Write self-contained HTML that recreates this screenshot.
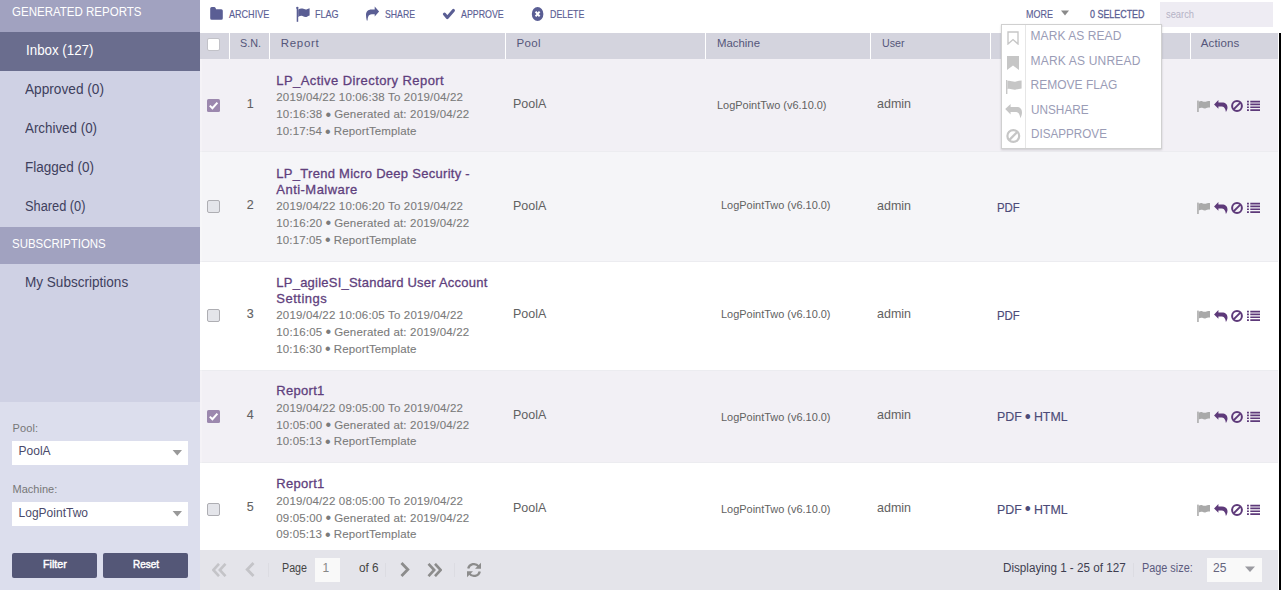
<!DOCTYPE html>
<html><head><meta charset="utf-8"><style>
html,body{margin:0;padding:0;}
body{width:1281px;height:590px;position:relative;overflow:hidden;background:#ffffff;font-family:"Liberation Sans", sans-serif;}
body>div,body>span{position:absolute;}
.t{white-space:nowrap;}
.bu{font-weight:400;font-size:1.4em;line-height:0;vertical-align:-0.1em;margin:0 -0.4px;-webkit-text-stroke:0;}
</style></head><body>
<div style="left:0px;top:0px;width:200px;height:402px;background:#cfd1e4;"></div>
<div style="left:0px;top:402px;width:200px;height:188px;background:#dcdeed;"></div>
<div style="left:0px;top:0px;width:200px;height:32px;background:#a1a2c0;"></div>
<span class="t" style="left:11.5px;top:6.14px;font-size:12px;line-height:12px;color:#ffffff;font-weight:400;transform:scaleX(0.9597);transform-origin:0 0;">GENERATED REPORTS</span>
<div style="left:0px;top:32px;width:200px;height:39px;background:#6a6d8e;"></div>
<span class="t" style="left:25.5px;top:43.15px;font-size:14px;line-height:14px;color:#ffffff;font-weight:400;transform:scaleX(0.9529);transform-origin:0 0;">Inbox (127)</span>
<span class="t" style="left:25px;top:82.15px;font-size:14px;line-height:14px;color:#3e405d;font-weight:400;transform:scaleX(0.9763);transform-origin:0 0;">Approved (0)</span>
<span class="t" style="left:25px;top:121.15px;font-size:14px;line-height:14px;color:#3e405d;font-weight:400;transform:scaleX(0.9541);transform-origin:0 0;">Archived (0)</span>
<span class="t" style="left:25px;top:160.15px;font-size:14px;line-height:14px;color:#3e405d;font-weight:400;transform:scaleX(0.9636);transform-origin:0 0;">Flagged (0)</span>
<span class="t" style="left:25px;top:199.15px;font-size:14px;line-height:14px;color:#3e405d;font-weight:400;transform:scaleX(0.9146);transform-origin:0 0;">Shared (0)</span>
<div style="left:0px;top:227px;width:200px;height:37px;background:#a1a2c0;"></div>
<span class="t" style="left:11.6px;top:238.04px;font-size:12px;line-height:12px;color:#ffffff;font-weight:400;transform:scaleX(0.9568);transform-origin:0 0;">SUBSCRIPTIONS</span>
<span class="t" style="left:25.4px;top:274.95px;font-size:14px;line-height:14px;color:#3e405d;font-weight:400;transform:scaleX(0.968);transform-origin:0 0;">My Subscriptions</span>
<span class="t" style="left:12.6px;top:422.69px;font-size:11px;line-height:11px;color:#777777;font-weight:400;letter-spacing:0.08px;">Pool:</span>
<div style="left:12px;top:441px;width:176px;height:24px;background:#ffffff;"></div>
<span class="t" style="left:18.6px;top:445.34px;font-size:12px;line-height:12px;color:#4a4a6a;font-weight:400;">PoolA</span>
<svg style="position:absolute;left:172px;top:449px" width="11" height="7" viewBox="0 0 11 7"><path d="M0.6 1h9.4l-4.7 5.4z" fill="#999"/></svg>
<span class="t" style="left:12.6px;top:483.99px;font-size:11px;line-height:11px;color:#777777;font-weight:400;">Machine:</span>
<div style="left:12px;top:502px;width:176px;height:24px;background:#ffffff;"></div>
<span class="t" style="left:18.6px;top:506.84px;font-size:12px;line-height:12px;color:#4a4a6a;font-weight:400;">LogPointTwo</span>
<svg style="position:absolute;left:172px;top:510px" width="11" height="7" viewBox="0 0 11 7"><path d="M0.6 1h9.4l-4.7 5.4z" fill="#999"/></svg>
<div style="left:12px;top:553px;width:85px;height:25px;background:#545777;border-radius:2px"></div>
<div style="left:103px;top:553px;width:85px;height:25px;background:#545777;border-radius:2px"></div>
<span class="t" style="left:43px;top:559.49px;font-size:11px;line-height:11px;color:#ffffff;font-weight:400;transform:scaleX(0.9705);transform-origin:0 0;-webkit-text-stroke:0.45px #ffffff;">Filter</span>
<span class="t" style="left:133px;top:559.49px;font-size:11px;line-height:11px;color:#ffffff;font-weight:400;transform:scaleX(0.9056);transform-origin:0 0;-webkit-text-stroke:0.45px #ffffff;">Reset</span>
<svg style="position:absolute;left:210px;top:7px" width="13" height="13" viewBox="0 0 13 13"><path d="M0.2 1.5Q0.2 0 1.7 0H4.2Q5.1 0 5.6 1L6.1 2.3H11.3Q12.8 2.3 12.8 3.8V11.3Q12.8 12.8 11.3 12.8H1.7Q0.2 12.8 0.2 11.3Z" fill="#5a5e94"/></svg>
<span class="t" style="left:228.5px;top:8.79px;font-size:11px;line-height:11px;color:#5a5e94;font-weight:400;transform:scaleX(0.8232);transform-origin:0 0;-webkit-text-stroke:0.15px #5a5e94;">ARCHIVE</span>
<svg style="position:absolute;left:296px;top:6px" width="14" height="16" viewBox="0 0 14 16"><rect x="0.7" y="1" width="1.5" height="14.8" fill="#5a5e94"/><circle cx="1.3" cy="1.9" r="1.1" fill="#5a5e94"/><path d="M2.2 3.6C3.5 2.8 5 2.2 6.5 2.6C8 3 9.5 3.8 11 3.2C11.8 2.9 12.5 2.5 13.6 2.2V9.6C12.5 10 11.8 10.4 11 10.8C9.5 11.4 8 10.7 6.5 10C5 9.5 3.5 10.2 2.2 11Z" fill="#5a5e94"/></svg>
<span class="t" style="left:314.75px;top:8.79px;font-size:11px;line-height:11px;color:#5a5e94;font-weight:400;transform:scaleX(0.822);transform-origin:0 0;-webkit-text-stroke:0.15px #5a5e94;">FLAG</span>
<svg style="position:absolute;left:365px;top:6px" width="15" height="15" viewBox="0 0 15 15"><path d="M14.1 5.5L9.7 0.56V3.6H6.5C3 3.6 1 5.8 1 9C1 11 1.3 12.8 1.75 14.46H2.6C2.7 12 3 8.2 6.8 8.2H9.7V10.56Z" fill="#5a5e94"/></svg>
<span class="t" style="left:384.6px;top:8.79px;font-size:11px;line-height:11px;color:#5a5e94;font-weight:400;transform:scaleX(0.7917);transform-origin:0 0;-webkit-text-stroke:0.15px #5a5e94;">SHARE</span>
<svg style="position:absolute;left:442px;top:8px" width="14" height="13" viewBox="0 0 14 13"><path d="M2.4 6.1L5.3 9.6L11.4 2.4" stroke="#5a5e94" stroke-width="3.1" fill="none" stroke-linecap="round" stroke-linejoin="round"/></svg>
<span class="t" style="left:461px;top:8.79px;font-size:11px;line-height:11px;color:#5a5e94;font-weight:400;transform:scaleX(0.8038);transform-origin:0 0;-webkit-text-stroke:0.15px #5a5e94;">APPROVE</span>
<svg style="position:absolute;left:531px;top:7px" width="14" height="14" viewBox="0 0 14 14"><ellipse cx="6.6" cy="7" rx="5.8" ry="7" fill="#5a5e94"/><path d="M4.6 4.7L8.6 9.3M8.6 4.7L4.6 9.3" stroke="#fff" stroke-width="2"/></svg>
<span class="t" style="left:549.6px;top:8.79px;font-size:11px;line-height:11px;color:#5a5e94;font-weight:400;transform:scaleX(0.8039);transform-origin:0 0;-webkit-text-stroke:0.15px #5a5e94;">DELETE</span>
<span class="t" style="left:1026px;top:8.79px;font-size:11px;line-height:11px;color:#5a5e94;font-weight:400;transform:scaleX(0.8182);transform-origin:0 0;-webkit-text-stroke:0.15px #5a5e94;">MORE</span>
<svg style="position:absolute;left:1061px;top:10px" width="8" height="6" viewBox="0 0 8 6"><path d="M0 0.5h8l-4 5z" fill="#8a8a8a"/></svg>
<span class="t" style="left:1090.3px;top:8.79px;font-size:11px;line-height:11px;color:#5a5e94;font-weight:400;transform:scaleX(0.8102);transform-origin:0 0;-webkit-text-stroke:0.3px #5a5e94;">0 SELECTED</span>
<div style="left:1160px;top:2px;width:113px;height:25px;background:#eeecf3;"></div>
<span class="t" style="left:1165.5px;top:8.59px;font-size:11px;line-height:11px;color:#b5b3c6;font-weight:400;transform:scaleX(0.8485);transform-origin:0 0;">search</span>
<div style="left:200px;top:33px;width:1079px;height:26px;background:#d4d4de;"></div>
<div style="left:229px;top:33px;width:1px;height:26px;background:#ffffff;"></div>
<div style="left:269px;top:33px;width:1px;height:26px;background:#ffffff;"></div>
<div style="left:505px;top:33px;width:1px;height:26px;background:#ffffff;"></div>
<div style="left:705px;top:33px;width:1px;height:26px;background:#ffffff;"></div>
<div style="left:870px;top:33px;width:1px;height:26px;background:#ffffff;"></div>
<div style="left:990px;top:33px;width:1px;height:26px;background:#ffffff;"></div>
<div style="left:1190px;top:33px;width:1px;height:26px;background:#ffffff;"></div>
<div style="left:1278px;top:33px;width:1px;height:26px;background:#ffffff;"></div>
<div style="left:207px;top:38px;width:13px;height:13px;background:#ffffff;box-sizing:border-box;border:1px solid #c2c2c8;border-radius:2px"></div>
<span class="t" style="left:240.4px;top:37.77px;font-size:11.5px;line-height:11.5px;color:#55567a;font-weight:400;transform:scaleX(0.9389);transform-origin:0 0;">S.N.</span>
<span class="t" style="left:280.7px;top:37.77px;font-size:11.5px;line-height:11.5px;color:#55567a;font-weight:400;letter-spacing:0.7px;">Report</span>
<span class="t" style="left:516.5px;top:37.77px;font-size:11.5px;line-height:11.5px;color:#55567a;font-weight:400;letter-spacing:0.333px;">Pool</span>
<span class="t" style="left:716.5px;top:37.77px;font-size:11.5px;line-height:11.5px;color:#55567a;font-weight:400;transform:scaleX(0.9892);transform-origin:0 0;">Machine</span>
<span class="t" style="left:881.5px;top:37.77px;font-size:11.5px;line-height:11.5px;color:#55567a;font-weight:400;transform:scaleX(0.9273);transform-origin:0 0;">User</span>
<span class="t" style="left:1001px;top:37.77px;font-size:11.5px;line-height:11.5px;color:#55567a;font-weight:400;">Format</span>
<span class="t" style="left:1200.8px;top:37.77px;font-size:11.5px;line-height:11.5px;color:#55567a;font-weight:400;letter-spacing:0.113px;">Actions</span>
<div style="left:200px;top:59px;width:1078px;height:93px;background:#f2f0f5;"></div>
<div style="left:200px;top:151px;width:1078px;height:1px;background:#ececf0;"></div>
<svg style="position:absolute;left:207px;top:99px" width="13" height="13" viewBox="0 0 13 13"><rect x="0" y="0" width="13" height="13" rx="1.5" fill="#9c88ae"/><path d="M2.8 6.6L5.4 9.2L10.4 3.6" stroke="#fff" stroke-width="2" fill="none"/></svg>
<span class="t" style="left:246.8px;top:97.92px;font-size:12.5px;line-height:12.5px;color:#616161;font-weight:400;-webkit-text-stroke:0.1px #616161;">1</span>
<span class="t" style="left:276.3px;top:74.00px;font-size:13px;line-height:13px;color:#5f3f7d;font-weight:400;letter-spacing:0.425px;-webkit-text-stroke:0.3px #5f3f7d;">LP_Active Directory Report</span>
<span class="t" style="left:276.3px;top:92.47px;font-size:11.5px;line-height:11.5px;color:#7b7b7b;font-weight:400;letter-spacing:0.162px;-webkit-text-stroke:0.1px #7b7b7b;">2019/04/22 10:06:38 To 2019/04/22</span>
<span class="t" style="left:276.3px;top:109.27px;font-size:11.5px;line-height:11.5px;color:#7b7b7b;font-weight:400;letter-spacing:0.169px;-webkit-text-stroke:0.1px #7b7b7b;">10:16:38 <b class="bu">&#8226;</b> Generated at: 2019/04/22</span>
<span class="t" style="left:276.3px;top:126.07px;font-size:11.5px;line-height:11.5px;color:#7b7b7b;font-weight:400;letter-spacing:0.125px;-webkit-text-stroke:0.1px #7b7b7b;">10:17:54 <b class="bu">&#8226;</b> ReportTemplate</span>
<span class="t" style="left:512.5px;top:97.00px;font-size:13px;line-height:13px;color:#616161;font-weight:400;transform:scaleX(0.9623);transform-origin:0 0;">PoolA</span>
<span class="t" style="left:716.9px;top:99.69px;font-size:11px;line-height:11px;color:#616161;font-weight:400;transform:scaleX(0.995);transform-origin:0 0;">LogPointTwo (v6.10.0)</span>
<span class="t" style="left:876.9px;top:97.00px;font-size:13px;line-height:13px;color:#616161;font-weight:400;transform:scaleX(0.9598);transform-origin:0 0;">admin</span>
<svg style="position:absolute;left:1197px;top:100px" width="14" height="12" viewBox="0 0 14 12"><rect x="0.2" y="0.6" width="1.5" height="11.4" fill="#a9a9a9"/><path d="M1.7 1.8C2.8 1.2 4 0.9 5.2 1.2C6.4 1.5 7.6 2.1 8.8 1.7C9.6 1.4 10.3 1.1 13 1.1V7.6C10.3 7.7 9.6 8 8.8 8.3C7.6 8.8 6.4 8.2 5.2 7.8C4 7.5 2.8 7.9 1.7 8.4Z" fill="#a9a9a9"/></svg>
<svg style="position:absolute;left:1213px;top:99px" width="15" height="14" viewBox="0 0 15 14"><path d="M1.06 5.4L5.4 1V3.5H9C12.5 3.5 14.5 5.5 14.5 8.5C14.5 10 13.8 11.7 12.9 12.9C12.8 10.8 11.5 7.4 9 7.4H5.4V9.75Z" fill="#5e3a7a"/></svg>
<svg style="position:absolute;left:1231px;top:100px" width="13" height="12" viewBox="0 0 13 12"><circle cx="6" cy="6" r="4.9" stroke="#5e3a7a" stroke-width="2" fill="none"/><path d="M2.6 9.4L9.4 2.6" stroke="#5e3a7a" stroke-width="2"/></svg>
<svg style="position:absolute;left:1247px;top:100px" width="13" height="12" viewBox="0 0 13 12"><path d="M0 0.7h1.9v1.7H0zM0 3.6h1.9v1.7H0zM0 6.4h1.9v1.7H0zM0 9.2h1.9v1.7H0zM3.3 0.7h9.7v1.7H3.3zM3.3 3.6h9.7v1.7H3.3zM3.3 6.4h9.7v1.7H3.3zM3.3 9.2h9.7v1.7H3.3z" fill="#5e3a7a"/></svg>
<div style="left:200px;top:152px;width:1078px;height:110px;background:#f5f5f8;"></div>
<div style="left:200px;top:261px;width:1078px;height:1px;background:#ececf0;"></div>
<div style="left:207px;top:200px;width:13px;height:13px;background:#e4e5ea;box-sizing:border-box;border:1px solid #aeaeb3;border-radius:2px"></div>
<span class="t" style="left:246.8px;top:199.42px;font-size:12.5px;line-height:12.5px;color:#616161;font-weight:400;-webkit-text-stroke:0.1px #616161;">2</span>
<span class="t" style="left:276.3px;top:166.60px;font-size:13px;line-height:13px;color:#5f3f7d;font-weight:400;letter-spacing:0.283px;-webkit-text-stroke:0.3px #5f3f7d;">LP_Trend Micro Deep Security -</span>
<span class="t" style="left:276.3px;top:183.00px;font-size:13px;line-height:13px;color:#5f3f7d;font-weight:400;letter-spacing:0.468px;-webkit-text-stroke:0.3px #5f3f7d;">Anti-Malware</span>
<span class="t" style="left:276.3px;top:200.77px;font-size:11.5px;line-height:11.5px;color:#7b7b7b;font-weight:400;letter-spacing:0.162px;-webkit-text-stroke:0.1px #7b7b7b;">2019/04/22 10:06:20 To 2019/04/22</span>
<span class="t" style="left:276.3px;top:217.77px;font-size:11.5px;line-height:11.5px;color:#7b7b7b;font-weight:400;letter-spacing:0.169px;-webkit-text-stroke:0.1px #7b7b7b;">10:16:20 <b class="bu">&#8226;</b> Generated at: 2019/04/22</span>
<span class="t" style="left:276.3px;top:234.67px;font-size:11.5px;line-height:11.5px;color:#7b7b7b;font-weight:400;letter-spacing:0.125px;-webkit-text-stroke:0.1px #7b7b7b;">10:17:05 <b class="bu">&#8226;</b> ReportTemplate</span>
<span class="t" style="left:512.5px;top:198.50px;font-size:13px;line-height:13px;color:#616161;font-weight:400;transform:scaleX(0.9623);transform-origin:0 0;">PoolA</span>
<span class="t" style="left:720.6px;top:199.99px;font-size:11px;line-height:11px;color:#616161;font-weight:400;transform:scaleX(0.995);transform-origin:0 0;">LogPointTwo (v6.10.0)</span>
<span class="t" style="left:876.9px;top:198.50px;font-size:13px;line-height:13px;color:#616161;font-weight:400;transform:scaleX(0.9598);transform-origin:0 0;">admin</span>
<span class="t" style="left:997.4px;top:200.50px;font-size:13px;line-height:13px;color:#4c4b78;font-weight:400;transform:scaleX(0.8769);transform-origin:0 0;-webkit-text-stroke:0.15px #4c4b78;">PDF</span>
<svg style="position:absolute;left:1197px;top:201.5px" width="14" height="12" viewBox="0 0 14 12"><rect x="0.2" y="0.6" width="1.5" height="11.4" fill="#a9a9a9"/><path d="M1.7 1.8C2.8 1.2 4 0.9 5.2 1.2C6.4 1.5 7.6 2.1 8.8 1.7C9.6 1.4 10.3 1.1 13 1.1V7.6C10.3 7.7 9.6 8 8.8 8.3C7.6 8.8 6.4 8.2 5.2 7.8C4 7.5 2.8 7.9 1.7 8.4Z" fill="#a9a9a9"/></svg>
<svg style="position:absolute;left:1213px;top:200.5px" width="15" height="14" viewBox="0 0 15 14"><path d="M1.06 5.4L5.4 1V3.5H9C12.5 3.5 14.5 5.5 14.5 8.5C14.5 10 13.8 11.7 12.9 12.9C12.8 10.8 11.5 7.4 9 7.4H5.4V9.75Z" fill="#5e3a7a"/></svg>
<svg style="position:absolute;left:1231px;top:201.5px" width="13" height="12" viewBox="0 0 13 12"><circle cx="6" cy="6" r="4.9" stroke="#5e3a7a" stroke-width="2" fill="none"/><path d="M2.6 9.4L9.4 2.6" stroke="#5e3a7a" stroke-width="2"/></svg>
<svg style="position:absolute;left:1247px;top:201.5px" width="13" height="12" viewBox="0 0 13 12"><path d="M0 0.7h1.9v1.7H0zM0 3.6h1.9v1.7H0zM0 6.4h1.9v1.7H0zM0 9.2h1.9v1.7H0zM3.3 0.7h9.7v1.7H3.3zM3.3 3.6h9.7v1.7H3.3zM3.3 6.4h9.7v1.7H3.3zM3.3 9.2h9.7v1.7H3.3z" fill="#5e3a7a"/></svg>
<div style="left:200px;top:262px;width:1078px;height:109px;background:#ffffff;"></div>
<div style="left:200px;top:370px;width:1078px;height:1px;background:#ececf0;"></div>
<div style="left:207px;top:309px;width:13px;height:13px;background:#e4e5ea;box-sizing:border-box;border:1px solid #aeaeb3;border-radius:2px"></div>
<span class="t" style="left:246.8px;top:307.92px;font-size:12.5px;line-height:12.5px;color:#616161;font-weight:400;-webkit-text-stroke:0.1px #616161;">3</span>
<span class="t" style="left:276.3px;top:275.90px;font-size:13px;line-height:13px;color:#5f3f7d;font-weight:400;letter-spacing:0.233px;-webkit-text-stroke:0.3px #5f3f7d;">LP_agileSI_Standard User Account</span>
<span class="t" style="left:276.3px;top:292.10px;font-size:13px;line-height:13px;color:#5f3f7d;font-weight:400;letter-spacing:0.501px;-webkit-text-stroke:0.3px #5f3f7d;">Settings</span>
<span class="t" style="left:276.3px;top:310.07px;font-size:11.5px;line-height:11.5px;color:#7b7b7b;font-weight:400;letter-spacing:0.162px;-webkit-text-stroke:0.1px #7b7b7b;">2019/04/22 10:06:05 To 2019/04/22</span>
<span class="t" style="left:276.3px;top:326.77px;font-size:11.5px;line-height:11.5px;color:#7b7b7b;font-weight:400;letter-spacing:0.169px;-webkit-text-stroke:0.1px #7b7b7b;">10:16:05 <b class="bu">&#8226;</b> Generated at: 2019/04/22</span>
<span class="t" style="left:276.3px;top:343.57px;font-size:11.5px;line-height:11.5px;color:#7b7b7b;font-weight:400;letter-spacing:0.125px;-webkit-text-stroke:0.1px #7b7b7b;">10:16:30 <b class="bu">&#8226;</b> ReportTemplate</span>
<span class="t" style="left:512.5px;top:307.00px;font-size:13px;line-height:13px;color:#616161;font-weight:400;transform:scaleX(0.9623);transform-origin:0 0;">PoolA</span>
<span class="t" style="left:720.6px;top:309.39px;font-size:11px;line-height:11px;color:#616161;font-weight:400;transform:scaleX(0.995);transform-origin:0 0;">LogPointTwo (v6.10.0)</span>
<span class="t" style="left:876.9px;top:307.00px;font-size:13px;line-height:13px;color:#616161;font-weight:400;transform:scaleX(0.9598);transform-origin:0 0;">admin</span>
<span class="t" style="left:997.4px;top:309.00px;font-size:13px;line-height:13px;color:#4c4b78;font-weight:400;transform:scaleX(0.8769);transform-origin:0 0;-webkit-text-stroke:0.15px #4c4b78;">PDF</span>
<svg style="position:absolute;left:1197px;top:310px" width="14" height="12" viewBox="0 0 14 12"><rect x="0.2" y="0.6" width="1.5" height="11.4" fill="#a9a9a9"/><path d="M1.7 1.8C2.8 1.2 4 0.9 5.2 1.2C6.4 1.5 7.6 2.1 8.8 1.7C9.6 1.4 10.3 1.1 13 1.1V7.6C10.3 7.7 9.6 8 8.8 8.3C7.6 8.8 6.4 8.2 5.2 7.8C4 7.5 2.8 7.9 1.7 8.4Z" fill="#a9a9a9"/></svg>
<svg style="position:absolute;left:1213px;top:309px" width="15" height="14" viewBox="0 0 15 14"><path d="M1.06 5.4L5.4 1V3.5H9C12.5 3.5 14.5 5.5 14.5 8.5C14.5 10 13.8 11.7 12.9 12.9C12.8 10.8 11.5 7.4 9 7.4H5.4V9.75Z" fill="#5e3a7a"/></svg>
<svg style="position:absolute;left:1231px;top:310px" width="13" height="12" viewBox="0 0 13 12"><circle cx="6" cy="6" r="4.9" stroke="#5e3a7a" stroke-width="2" fill="none"/><path d="M2.6 9.4L9.4 2.6" stroke="#5e3a7a" stroke-width="2"/></svg>
<svg style="position:absolute;left:1247px;top:310px" width="13" height="12" viewBox="0 0 13 12"><path d="M0 0.7h1.9v1.7H0zM0 3.6h1.9v1.7H0zM0 6.4h1.9v1.7H0zM0 9.2h1.9v1.7H0zM3.3 0.7h9.7v1.7H3.3zM3.3 3.6h9.7v1.7H3.3zM3.3 6.4h9.7v1.7H3.3zM3.3 9.2h9.7v1.7H3.3z" fill="#5e3a7a"/></svg>
<div style="left:200px;top:371px;width:1078px;height:92px;background:#f2f0f5;"></div>
<div style="left:200px;top:462px;width:1078px;height:1px;background:#ececf0;"></div>
<svg style="position:absolute;left:207px;top:410px" width="13" height="13" viewBox="0 0 13 13"><rect x="0" y="0" width="13" height="13" rx="1.5" fill="#9c88ae"/><path d="M2.8 6.6L5.4 9.2L10.4 3.6" stroke="#fff" stroke-width="2" fill="none"/></svg>
<span class="t" style="left:246.8px;top:408.92px;font-size:12.5px;line-height:12.5px;color:#616161;font-weight:400;-webkit-text-stroke:0.1px #616161;">4</span>
<span class="t" style="left:276.3px;top:384.40px;font-size:13px;line-height:13px;color:#5f3f7d;font-weight:400;letter-spacing:0.287px;-webkit-text-stroke:0.3px #5f3f7d;">Report1</span>
<span class="t" style="left:276.3px;top:402.87px;font-size:11.5px;line-height:11.5px;color:#7b7b7b;font-weight:400;letter-spacing:0.162px;-webkit-text-stroke:0.1px #7b7b7b;">2019/04/22 09:05:00 To 2019/04/22</span>
<span class="t" style="left:276.3px;top:419.67px;font-size:11.5px;line-height:11.5px;color:#7b7b7b;font-weight:400;letter-spacing:0.169px;-webkit-text-stroke:0.1px #7b7b7b;">10:05:00 <b class="bu">&#8226;</b> Generated at: 2019/04/22</span>
<span class="t" style="left:276.3px;top:436.37px;font-size:11.5px;line-height:11.5px;color:#7b7b7b;font-weight:400;letter-spacing:0.125px;-webkit-text-stroke:0.1px #7b7b7b;">10:05:13 <b class="bu">&#8226;</b> ReportTemplate</span>
<span class="t" style="left:512.5px;top:408.00px;font-size:13px;line-height:13px;color:#616161;font-weight:400;transform:scaleX(0.9623);transform-origin:0 0;">PoolA</span>
<span class="t" style="left:720.6px;top:411.99px;font-size:11px;line-height:11px;color:#616161;font-weight:400;transform:scaleX(0.995);transform-origin:0 0;">LogPointTwo (v6.10.0)</span>
<span class="t" style="left:876.9px;top:408.00px;font-size:13px;line-height:13px;color:#616161;font-weight:400;transform:scaleX(0.9598);transform-origin:0 0;">admin</span>
<span class="t" style="left:997.4px;top:410.00px;font-size:13px;line-height:13px;color:#4c4b78;font-weight:400;transform:scaleX(0.9509);transform-origin:0 0;-webkit-text-stroke:0.15px #4c4b78;">PDF <b class="bu">&#8226;</b> HTML</span>
<svg style="position:absolute;left:1197px;top:411px" width="14" height="12" viewBox="0 0 14 12"><rect x="0.2" y="0.6" width="1.5" height="11.4" fill="#a9a9a9"/><path d="M1.7 1.8C2.8 1.2 4 0.9 5.2 1.2C6.4 1.5 7.6 2.1 8.8 1.7C9.6 1.4 10.3 1.1 13 1.1V7.6C10.3 7.7 9.6 8 8.8 8.3C7.6 8.8 6.4 8.2 5.2 7.8C4 7.5 2.8 7.9 1.7 8.4Z" fill="#a9a9a9"/></svg>
<svg style="position:absolute;left:1213px;top:410px" width="15" height="14" viewBox="0 0 15 14"><path d="M1.06 5.4L5.4 1V3.5H9C12.5 3.5 14.5 5.5 14.5 8.5C14.5 10 13.8 11.7 12.9 12.9C12.8 10.8 11.5 7.4 9 7.4H5.4V9.75Z" fill="#5e3a7a"/></svg>
<svg style="position:absolute;left:1231px;top:411px" width="13" height="12" viewBox="0 0 13 12"><circle cx="6" cy="6" r="4.9" stroke="#5e3a7a" stroke-width="2" fill="none"/><path d="M2.6 9.4L9.4 2.6" stroke="#5e3a7a" stroke-width="2"/></svg>
<svg style="position:absolute;left:1247px;top:411px" width="13" height="12" viewBox="0 0 13 12"><path d="M0 0.7h1.9v1.7H0zM0 3.6h1.9v1.7H0zM0 6.4h1.9v1.7H0zM0 9.2h1.9v1.7H0zM3.3 0.7h9.7v1.7H3.3zM3.3 3.6h9.7v1.7H3.3zM3.3 6.4h9.7v1.7H3.3zM3.3 9.2h9.7v1.7H3.3z" fill="#5e3a7a"/></svg>
<div style="left:200px;top:463px;width:1078px;height:87px;background:#ffffff;"></div>
<div style="left:207px;top:503px;width:13px;height:13px;background:#e4e5ea;box-sizing:border-box;border:1px solid #aeaeb3;border-radius:2px"></div>
<span class="t" style="left:246.8px;top:501.42px;font-size:12.5px;line-height:12.5px;color:#616161;font-weight:400;-webkit-text-stroke:0.1px #616161;">5</span>
<span class="t" style="left:276.3px;top:477.40px;font-size:13px;line-height:13px;color:#5f3f7d;font-weight:400;letter-spacing:0.287px;-webkit-text-stroke:0.3px #5f3f7d;">Report1</span>
<span class="t" style="left:276.3px;top:495.57px;font-size:11.5px;line-height:11.5px;color:#7b7b7b;font-weight:400;letter-spacing:0.162px;-webkit-text-stroke:0.1px #7b7b7b;">2019/04/22 08:05:00 To 2019/04/22</span>
<span class="t" style="left:276.3px;top:512.67px;font-size:11.5px;line-height:11.5px;color:#7b7b7b;font-weight:400;letter-spacing:0.169px;-webkit-text-stroke:0.1px #7b7b7b;">09:05:00 <b class="bu">&#8226;</b> Generated at: 2019/04/22</span>
<span class="t" style="left:276.3px;top:529.17px;font-size:11.5px;line-height:11.5px;color:#7b7b7b;font-weight:400;letter-spacing:0.125px;-webkit-text-stroke:0.1px #7b7b7b;">09:05:13 <b class="bu">&#8226;</b> ReportTemplate</span>
<span class="t" style="left:512.5px;top:500.50px;font-size:13px;line-height:13px;color:#616161;font-weight:400;transform:scaleX(0.9623);transform-origin:0 0;">PoolA</span>
<span class="t" style="left:720.6px;top:504.29px;font-size:11px;line-height:11px;color:#616161;font-weight:400;transform:scaleX(0.995);transform-origin:0 0;">LogPointTwo (v6.10.0)</span>
<span class="t" style="left:876.9px;top:500.50px;font-size:13px;line-height:13px;color:#616161;font-weight:400;transform:scaleX(0.9598);transform-origin:0 0;">admin</span>
<span class="t" style="left:997.4px;top:502.50px;font-size:13px;line-height:13px;color:#4c4b78;font-weight:400;transform:scaleX(0.9509);transform-origin:0 0;-webkit-text-stroke:0.15px #4c4b78;">PDF <b class="bu">&#8226;</b> HTML</span>
<svg style="position:absolute;left:1197px;top:503.5px" width="14" height="12" viewBox="0 0 14 12"><rect x="0.2" y="0.6" width="1.5" height="11.4" fill="#a9a9a9"/><path d="M1.7 1.8C2.8 1.2 4 0.9 5.2 1.2C6.4 1.5 7.6 2.1 8.8 1.7C9.6 1.4 10.3 1.1 13 1.1V7.6C10.3 7.7 9.6 8 8.8 8.3C7.6 8.8 6.4 8.2 5.2 7.8C4 7.5 2.8 7.9 1.7 8.4Z" fill="#a9a9a9"/></svg>
<svg style="position:absolute;left:1213px;top:502.5px" width="15" height="14" viewBox="0 0 15 14"><path d="M1.06 5.4L5.4 1V3.5H9C12.5 3.5 14.5 5.5 14.5 8.5C14.5 10 13.8 11.7 12.9 12.9C12.8 10.8 11.5 7.4 9 7.4H5.4V9.75Z" fill="#5e3a7a"/></svg>
<svg style="position:absolute;left:1231px;top:503.5px" width="13" height="12" viewBox="0 0 13 12"><circle cx="6" cy="6" r="4.9" stroke="#5e3a7a" stroke-width="2" fill="none"/><path d="M2.6 9.4L9.4 2.6" stroke="#5e3a7a" stroke-width="2"/></svg>
<svg style="position:absolute;left:1247px;top:503.5px" width="13" height="12" viewBox="0 0 13 12"><path d="M0 0.7h1.9v1.7H0zM0 3.6h1.9v1.7H0zM0 6.4h1.9v1.7H0zM0 9.2h1.9v1.7H0zM3.3 0.7h9.7v1.7H3.3zM3.3 3.6h9.7v1.7H3.3zM3.3 6.4h9.7v1.7H3.3zM3.3 9.2h9.7v1.7H3.3z" fill="#5e3a7a"/></svg>
<div style="left:200px;top:59px;width:2px;height:491px;background:rgba(255,255,255,0.22);"></div>
<div style="left:200px;top:550px;width:1078px;height:40px;background:#e4e4ea;"></div>
<svg style="position:absolute;left:212px;top:563px" width="15" height="14" viewBox="0 0 15 14"><path d="M7 0.8L1.3 7L7 13.2M13.5 0.8L7.8 7L13.5 13.2" stroke="#c4c4c8" stroke-width="2.6" fill="none"/></svg>
<svg style="position:absolute;left:245px;top:562px" width="10" height="15" viewBox="0 0 10 15"><path d="M8.5 1L2.2 7.5L8.5 14" stroke="#c4c4c8" stroke-width="2.8" fill="none"/></svg>
<div style="left:268px;top:563px;width:1px;height:14px;background:#dcdce2;"></div>
<span class="t" style="left:281.5px;top:561.84px;font-size:12px;line-height:12px;color:#444444;font-weight:400;transform:scaleX(0.8922);transform-origin:0 0;">Page</span>
<div style="left:315px;top:558px;width:25px;height:24px;background:#f9f9f9;"></div>
<span class="t" style="left:322.4px;top:561.84px;font-size:12px;line-height:12px;color:#888888;font-weight:400;">1</span>
<span class="t" style="left:359.3px;top:561.84px;font-size:12px;line-height:12px;color:#444444;font-weight:400;transform:scaleX(0.983);transform-origin:0 0;">of 6</span>
<div style="left:385px;top:563px;width:1px;height:14px;background:#dcdce2;"></div>
<svg style="position:absolute;left:400px;top:562px" width="10" height="15" viewBox="0 0 10 15"><path d="M1.5 1L7.8 7.5L1.5 14" stroke="#8c8c8c" stroke-width="2.8" fill="none"/></svg>
<svg style="position:absolute;left:427px;top:563px" width="15" height="14" viewBox="0 0 15 14"><path d="M1.5 0.8L7.2 7L1.5 13.2M8 0.8L13.7 7L8 13.2" stroke="#8c8c8c" stroke-width="2.6" fill="none"/></svg>
<div style="left:454px;top:563px;width:1px;height:14px;background:#dcdce2;"></div>
<svg style="position:absolute;left:466px;top:562px" width="16" height="16" viewBox="0 0 16 16"><path d="M2.2 6.6A5.9 5.9 0 0 1 12.6 4.4" stroke="#8c8c8c" stroke-width="2.3" fill="none"/><path d="M15 0.8V6.8H9Z" fill="#8c8c8c"/><path d="M13.8 9.4A5.9 5.9 0 0 1 3.4 11.6" stroke="#8c8c8c" stroke-width="2.3" fill="none"/><path d="M1 15.2V9.2H7Z" fill="#8c8c8c"/></svg>
<span class="t" style="left:1003.2px;top:562.14px;font-size:12px;line-height:12px;color:#3e3e50;font-weight:400;transform:scaleX(0.9733);transform-origin:0 0;">Displaying 1 - 25 of 127</span>
<div style="left:1133px;top:563px;width:1px;height:14px;background:#dcdce2;"></div>
<span class="t" style="left:1142.2px;top:562.14px;font-size:12px;line-height:12px;color:#5b5a7e;font-weight:400;transform:scaleX(0.9047);transform-origin:0 0;">Page size:</span>
<div style="left:1207px;top:558px;width:55px;height:24px;background:#f9f9f9;"></div>
<span class="t" style="left:1213px;top:562.34px;font-size:12px;line-height:12px;color:#66657e;font-weight:400;">25</span>
<svg style="position:absolute;left:1245px;top:566px" width="10" height="6" viewBox="0 0 10 6"><path d="M0 0.5h10l-5 5.5z" fill="#9a9aa0"/></svg>
<div style="left:1279px;top:33px;width:2px;height:557px;background:#000000;"></div>
<div style="left:1001px;top:24px;width:161px;height:125px;background:#ffffff;box-sizing:border-box;border:1px solid #d0d0d0;box-shadow:0 1px 2px rgba(0,0,0,0.16)"></div>
<div style="left:1025px;top:25px;width:1px;height:123px;background:#e6e6e6;"></div>
<svg style="position:absolute;left:1007px;top:31px" width="12" height="14" viewBox="0 0 12 14"><path d="M1 1H11V13L6 8.6L1 13Z" stroke="#c6c6c6" stroke-width="1.35" fill="none" stroke-linejoin="miter"/></svg>
<svg style="position:absolute;left:1007px;top:56px" width="12" height="14" viewBox="0 0 12 14"><path d="M0 0H12V14L6 9.4L0 14Z" fill="#c6c6c6"/></svg>
<svg style="position:absolute;left:1006px;top:80px" width="16" height="14" viewBox="0 0 16 14"><rect x="0" y="0" width="1.4" height="14" fill="#c6c6c6"/><path d="M1.4 1.2C4 -0.2 7 2.6 10 1.6C12 1 14 0.6 15.6 0.6V8.4C14 8.6 12 9 10 9.6C7 10.6 4 7.8 1.4 9.2Z" fill="#c6c6c6"/></svg>
<svg style="position:absolute;left:1004px;top:103px" width="19" height="16" viewBox="0 0 19 16"><path d="M1.2 6.1L6.6 0.9V4.1H12.9C16 4.1 18 6 18 9.5C18 11.5 17.2 13.8 16.3 15.3C16.1 12.5 15 9 12.2 8.9H6.6V11.4Z" fill="#c6c6c6"/></svg>
<svg style="position:absolute;left:1006px;top:129px" width="15" height="14" viewBox="0 0 15 14"><circle cx="7.3" cy="7" r="5.9" stroke="#c6c6c6" stroke-width="2.2" fill="none"/><path d="M3.2 11.1L11.4 2.9" stroke="#c6c6c6" stroke-width="2.2"/></svg>
<span class="t" style="left:1030.5px;top:30.44px;font-size:12px;line-height:12px;color:#9a9cb6;font-weight:400;letter-spacing:0.073px;">MARK AS READ</span>
<span class="t" style="left:1030.5px;top:54.84px;font-size:12px;line-height:12px;color:#9a9cb6;font-weight:400;letter-spacing:0.189px;">MARK AS UNREAD</span>
<span class="t" style="left:1030.5px;top:79.24px;font-size:12px;line-height:12px;color:#9a9cb6;font-weight:400;letter-spacing:0.02px;">REMOVE FLAG</span>
<span class="t" style="left:1030.5px;top:103.64px;font-size:12px;line-height:12px;color:#9a9cb6;font-weight:400;transform:scaleX(0.9816);transform-origin:0 0;">UNSHARE</span>
<span class="t" style="left:1030.5px;top:128.04px;font-size:12px;line-height:12px;color:#9a9cb6;font-weight:400;transform:scaleX(0.9731);transform-origin:0 0;">DISAPPROVE</span>
</body></html>
